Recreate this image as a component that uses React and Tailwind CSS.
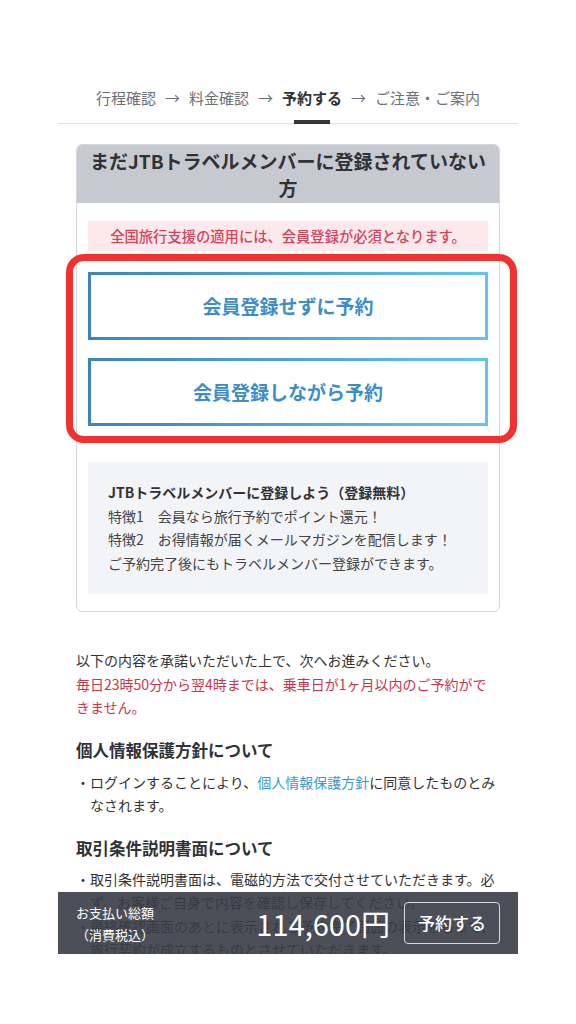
import React from 'react'

const STEPS = [
  { label: '行程確認' },
  { label: '料金確認' },
  { label: '予約する', active: true },
  { label: 'ご注意・ご案内' },
]

function Steps() {
  return (
    <div className="h-[38px] border-b border-[#e3e5e8] flex justify-center items-start gap-[9px] text-[15px] leading-6 text-[#6b6f76]">
      {STEPS.map((s, i) => (
        <React.Fragment key={s.label}>
          {i > 0 && <span className="text-[#6b6f76]">→</span>}
          {s.active ? (
            <div className="flex flex-col items-center">
              <span className="font-bold text-[#2f3236]">{s.label}</span>
              <div className="mt-[10px] h-[4px] w-[36px] bg-[#33363b]" />
            </div>
          ) : (
            <span>{s.label}</span>
          )}
        </React.Fragment>
      ))}
    </div>
  )
}

function OutlineButton({ children, className = '' }) {
  return (
    <div className={`h-[68px] p-[3px] bg-linear-to-r from-[#3b84bf] to-[#5fc6f1] ${className}`}>
      <button className="w-full h-full bg-white text-[19px] font-bold text-[#3d8ec7]">
        {children}
      </button>
    </div>
  )
}

function Bullet({ children }) {
  return (
    <div className="flex text-[14px] leading-[23.5px] text-[#333]">
      <span className="w-[14px] shrink-0">・</span>
      <p>{children}</p>
    </div>
  )
}

export default function App() {
  return (
    <div className="w-[576px] h-[1024px] bg-white font-['Noto_Sans_CJK_JP',sans-serif]">
      <div className="ml-[58px] w-[460px] h-[954px] relative overflow-hidden pt-[86px]">
        <Steps />

        <div className="px-[18px]">
          <div className="mt-[20px] border border-[#d3d6da] rounded-[6px]">
            <div className="h-[58px] rounded-t-[5px] bg-[#c6cad0] flex items-center justify-center text-center text-[19px] font-bold leading-[27px] text-[#303236] whitespace-nowrap">
              <p>まだJTBトラベルメンバーに登録されていない<br />方</p>
            </div>
            <div className="px-[11px] pt-[18px] pb-[17px]">
              <div className="h-[30px] bg-[#fde8eb] text-center text-[14.3px] leading-[30px] font-medium text-[#d2455d]">
                全国旅行支援の適用には、会員登録が必須となります。
              </div>
              <div className="relative mt-[21px]">
                <OutlineButton>会員登録せずに予約</OutlineButton>
                <OutlineButton className="mt-[18px]">会員登録しながら予約</OutlineButton>
                <div className="absolute -top-[18px] -bottom-[17px] -left-[22px] -right-[29px] border-[7px] border-[#f2302f] rounded-[18px] pointer-events-none" />
              </div>
              <div className="mt-[36px] bg-[#f2f4f7] px-[20px] py-[19px] text-[14px] leading-[23.5px] text-[#444]">
                <p className="font-bold text-[#333]">JTBトラベルメンバーに登録しよう（登録無料）</p>
                <p>特徴1　会員なら旅行予約でポイント還元！</p>
                <p>特徴2　お得情報が届くメールマガジンを配信します！</p>
                <p>ご予約完了後にもトラベルメンバー登録ができます。</p>
              </div>
            </div>
          </div>

          <div className="mt-[37px] text-[14px] leading-[23.5px]">
            <p className="text-[#333]">以下の内容を承諾いただいた上で、次へお進みください。</p>
            <p className="text-[#c9344f]">毎日23時50分から翌4時までは、乗車日が1ヶ月以内のご予約ができません。</p>
          </div>

          <h2 className="mt-[18px] text-[16.5px] leading-6 font-bold text-[#2f3236]">個人情報保護方針について</h2>
          <div className="mt-[9px]">
            <Bullet>
              ログインすることにより、<span className="text-[#3a9acf]">個人情報保護方針</span>に同意したものとみなされます。
            </Bullet>
          </div>

          <h2 className="mt-[18px] text-[16.5px] leading-6 font-bold text-[#2f3236]">取引条件説明書面について</h2>
          <div className="mt-[8px]">
            <Bullet>取引条件説明書面は、電磁的方法で交付させていただきます。必ず、お客様ご自身で内容を確認し保存してください。</Bullet>
            <Bullet>最終確認画面のあとに表示される予約完了画面の表示をもって、旅行契約が成立するものとさせていただきます。</Bullet>
          </div>
        </div>

        <div className="absolute left-0 right-0 bottom-0 h-[62px] bg-[#393c45]/90 flex items-center pl-[18px] pr-[18px] text-white">
          <div className="flex-1 text-[13px] leading-[22px] pt-[2px]">
            <p>お支払い総額</p>
            <p>（消費税込）</p>
          </div>
          <div className="text-[29px] font-normal leading-none">114,600円</div>
          <button className="ml-[14px] w-[96px] h-[42px] border-[1.5px] border-[#d8dadd] rounded-[4px] text-[17px] font-medium">
            予約する
          </button>
        </div>
      </div>
    </div>
  )
}
